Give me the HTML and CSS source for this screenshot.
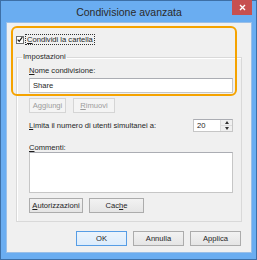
FILE: index.html
```html
<!DOCTYPE html>
<html lang="it">
<head>
    <meta charset="UTF-8">
    <title>Condivisione avanzata</title>
    <link rel="stylesheet" href="styles.css">
</head>
<body>
    <div class="window">
        <div class="titlebar">
            <span class="title">Condivisione avanzata</span>
            <span class="close">
                <svg width="7" height="7" viewBox="0 0 7 7"><path d="M1 1L6 6M6 1L1 6" stroke="#fff" stroke-width="1.4"/></svg>
            </span>
        </div>
        <div class="client">
            <label class="check-row">
                <span class="checkbox">
                    <svg width="7" height="7" viewBox="0 0 7 7"><path d="M0.8 3.6L2.6 5.6L6.2 0.8" fill="none" stroke="#111" stroke-width="1.3"/></svg>
                </span>
                <span class="focus"><u>C</u>ondividi la cartella</span>
            </label>
            <fieldset class="group">
                <legend>Impostazioni</legend>
                <div class="label"><u>N</u>ome condivisione:</div>
                <div class="textbox">Share</div>
                <div class="btn-row">
                    <button class="btn btn-add" disabled>Aggiungi</button>
                    <button class="btn btn-remove" disabled><u>R</u>imuovi</button>
                </div>
                <div class="limit-row">
                    <span><u>L</u>imita il numero di utenti simultanei a:</span>
                    <div class="spinner">
                        <span class="spin-value">20</span>
                        <span class="spin-arrows">
                            <span class="arrow up"></span>
                            <span class="arrow down"></span>
                        </span>
                    </div>
                </div>
                <div class="label label-comments"><u>C</u>ommenti:</div>
                <div class="textarea"></div>
                <div class="btn-row btn-row-bottom">
                    <button class="btn btn-perm"><u>A</u>utorizzazioni</button>
                    <button class="btn btn-cache">Cac<u>h</u>e</button>
                </div>
            </fieldset>
            <div class="footer">
                <button class="btn btn-foot btn-default">OK</button>
                <button class="btn btn-foot">Annulla</button>
                <button class="btn btn-foot">Applica</button>
            </div>
        </div>
        <div class="highlight"></div>
    </div>
</body>
</html>
```

FILE: styles.css
```css
body {
    margin: 0;
    font-family: "Liberation Sans", Arial, sans-serif;
    font-size: 7.6px;
    color: #1e1e1e;
}
.window {
    position: relative;
    width: 257px;
    height: 260px;
    box-sizing: border-box;
    border: 1px solid #3d6fa6;
    background-color: #6aadf1;
    display: flex;
    flex-direction: column;
}
.titlebar {
    position: relative;
    height: 21px;
    display: flex;
    align-items: center;
    justify-content: center;
}
.title {
    font-size: 10.5px;
    color: #2a2a2a;
    padding-left: 1px;
}
.close {
    position: absolute;
    top: -1px;
    right: 4px;
    width: 20px;
    height: 15px;
    background-color: #c75050;
    display: flex;
    align-items: center;
    justify-content: center;
}
.client {
    margin: 0 4px 0 5px;
    height: 231px;
    box-sizing: border-box;
    border: 1px solid #99bfe8;
    background-color: #f0f0f0;
    padding: 11px 9px 0 9px;
    display: flex;
    flex-direction: column;
}
.check-row {
    display: flex;
    align-items: center;
    height: 11px;
    gap: 2px;
}
.checkbox {
    width: 8px;
    height: 8px;
    box-sizing: border-box;
    border: 1px solid #707070;
    background-color: #fff;
    display: flex;
    align-items: center;
    justify-content: center;
}
.focus {
    outline: 1px dotted #333;
    padding: 0 1px;
    line-height: 9px;
}
.group {
    margin: 7px 0 0 0;
    padding: 4px 8px 8px 12px;
    border: 1px solid #d9d9d9;
    box-shadow: inset 1px 1px 0 #fff;
    display: flex;
    flex-direction: column;
    min-width: 0;
}
.group legend {
    padding: 0 1px;
    margin-left: -7px;
    line-height: 10px;
}
.label {
    line-height: 10px;
}
.textbox {
    margin-top: 2px;
    height: 15px;
    box-sizing: border-box;
    border: 1px solid #c6c6c6;
    border-top-color: #abadb3;
    background-color: #fff;
    padding-left: 3px;
    line-height: 13px;
}
.btn-row {
    display: flex;
    gap: 7px;
    margin-top: 5px;
}
.btn {
    font-family: inherit;
    font-size: 7.6px;
    color: #1e1e1e;
    height: 15px;
    padding: 0;
    margin: 0;
    border: 1px solid #acacac;
    border-radius: 0;
    background: linear-gradient(#f2f2f2, #e5e5e5);
}
.btn:disabled {
    color: #9c9c9c;
    border-color: #d5d5d5;
    background: #f4f4f4;
}
.btn-add {
    width: 37px;
}
.btn-remove {
    width: 42px;
}
.limit-row {
    margin-top: 6px;
    display: flex;
    align-items: center;
    justify-content: space-between;
    height: 13px;
}
.spinner {
    width: 40px;
    height: 13px;
    box-sizing: border-box;
    border: 1px solid #c6c6c6;
    border-top-color: #abadb3;
    background-color: #fff;
    display: flex;
}
.spin-value {
    flex: 1;
    padding-left: 3px;
    line-height: 11px;
}
.spin-arrows {
    width: 11px;
    display: flex;
    flex-direction: column;
    border-left: 1px solid #dcdcdc;
    background-color: #f0f0f0;
}
.arrow {
    flex: 1;
    display: flex;
    align-items: center;
    justify-content: center;
}
.arrow.up {
    border-bottom: 1px solid #dcdcdc;
}
.arrow::before {
    content: "";
    border-left: 2.5px solid transparent;
    border-right: 2.5px solid transparent;
}
.arrow.up::before {
    border-bottom: 3px solid #333;
}
.arrow.down::before {
    border-top: 3px solid #333;
}
.label-comments {
    margin-top: 11px;
    line-height: 9px;
}
.textarea {
    height: 41px;
    box-sizing: border-box;
    border: 1px solid #c6c6c6;
    border-top-color: #abadb3;
    background-color: #fff;
}
.btn-row-bottom {
    margin-top: 5px;
    gap: 6px;
}
.btn-perm {
    width: 54px;
}
.btn-cache {
    width: 55px;
}
.footer {
    display: flex;
    justify-content: flex-end;
    gap: 6px;
    margin-top: 9px;
    padding-right: 1px;
}
.btn-foot {
    width: 51px;
    height: 15px;
}
.btn-default {
    border-color: #569de5;
    background: linear-gradient(#ebf4fc, #dcecfc);
}
.highlight {
    position: absolute;
    left: 10px;
    top: 25px;
    width: 226px;
    height: 70px;
    box-sizing: border-box;
    border: 2px solid #f5a300;
    border-radius: 6px;
    pointer-events: none;
}
```
